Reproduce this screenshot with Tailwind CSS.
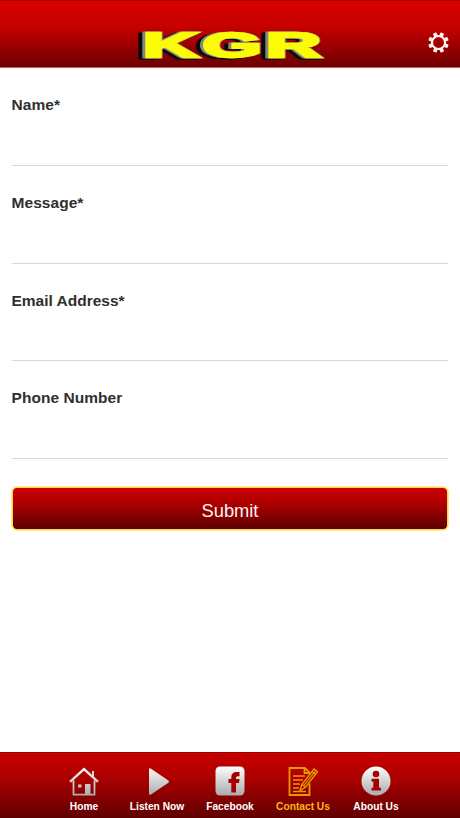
<!DOCTYPE html>
<html lang="en">
<head>
    <meta charset="UTF-8">
    <meta name="viewport" content="width=device-width, initial-scale=1.0">
    <title>KGR - Contact Us</title>
    <script src="https://cdn.jsdelivr.net/npm/@tailwindcss/browser@4"></script>
</head>
<body class="bg-white font-['Liberation_Sans',Arial,sans-serif]">

    <div class="flex flex-col w-full h-[818px] overflow-hidden">

        <!-- header -->
        <header class="relative shrink-0 h-[68px] border-t border-b border-t-[#a80000] border-b-[#c06060] bg-[linear-gradient(to_bottom,#db0000,#c40000_40%,#6d0000)]">
            <svg class="absolute left-[122px] top-[13px] overflow-visible [filter:drop-shadow(-2.5px_0.5px_0_#858585)_drop-shadow(1.5px_0.5px_0_#858585)_drop-shadow(-4px_1.5px_0_#0a0a0a)]" width="220" height="50" viewBox="0 0 220 50" role="img" aria-label="KGR">
                <text transform="translate(21 43) scale(2.17 1)" font-family="Liberation Sans" font-weight="700" font-size="35" fill="#fbfb05" stroke="#fbfb05" stroke-width="2.5" stroke-linejoin="miter" textLength="82" lengthAdjust="spacing">KGR</text>
            </svg>
            <button class="absolute left-[428px] top-[31px]" aria-label="Settings">
                <svg width="21" height="21" viewBox="-10 -10 20 20">
                    <g fill="#fff4ef">
                        <rect id="tooth" x="-1.8" y="-9.8" width="3.6" height="4" rx=".6" transform="rotate(22.5)"/>
                        <use href="#tooth" transform="rotate(45)"/>
                        <use href="#tooth" transform="rotate(90)"/>
                        <use href="#tooth" transform="rotate(135)"/>
                        <use href="#tooth" transform="rotate(180)"/>
                        <use href="#tooth" transform="rotate(225)"/>
                        <use href="#tooth" transform="rotate(270)"/>
                        <use href="#tooth" transform="rotate(315)"/>
                    </g>
                    <circle r="6.2" fill="none" stroke="#fff4ef" stroke-width="2"/>
                </svg>
            </button>
        </header>

        <!-- form -->
        <form class="flex-1 px-3 text-[#2f2f2f]">
            <div class="h-[97.8px] border-b border-[#d8d8d8] pt-[27px]">
                <label class="block text-[15.5px] leading-5 font-bold tracking-[0.05px] -ml-[0.5px]" for="name">Name*</label>
                <input class="block w-full h-10 outline-none" id="name" type="text">
            </div>
            <div class="h-[97.8px] border-b border-[#d8d8d8] pt-[27px]">
                <label class="block text-[15.5px] leading-5 font-bold tracking-[0.05px] -ml-[0.5px]" for="message">Message*</label>
                <input class="block w-full h-10 outline-none" id="message" type="text">
            </div>
            <div class="h-[97.8px] border-b border-[#d8d8d8] pt-[27px]">
                <label class="block text-[15.5px] leading-5 font-bold -ml-[0.5px]" for="email">Email Address*</label>
                <input class="block w-full h-10 outline-none" id="email" type="email">
            </div>
            <div class="h-[97.8px] border-b border-[#d8d8d8] pt-[27px]">
                <label class="block text-[15.5px] leading-5 font-bold tracking-[0.05px] -ml-[0.5px]" for="phone">Phone Number</label>
                <input class="block w-full h-10 outline-none" id="phone" type="tel">
            </div>
            <button class="block w-full h-[43px] mt-[28px] rounded-[5px] border border-[#ffd83c] bg-[linear-gradient(to_bottom,#cb0000,#b00000_35%,#5c0000)] text-[18.3px] text-[#fff4f0] pt-[5px] shadow-[0_0_0_0.6px_#ffd83c]" type="button">Submit</button>
        </form>

        <!-- tab bar -->
        <nav class="shrink-0 h-[66px] flex justify-center border-t border-[#960000] bg-[linear-gradient(to_bottom,#c80000,#b00000_35%,#600000)] text-white text-[10.2px] leading-3 font-bold whitespace-nowrap">
            <a class="w-[73px] flex flex-col items-center pt-[13px] gap-[5px]">
                <svg width="30" height="30" viewBox="0 0 30 30">
                    <defs>
                        <linearGradient id="silver" gradientUnits="userSpaceOnUse" x1="0" y1="0" x2="0" y2="30">
                            <stop offset="0" stop-color="#ffffff"/>
                            <stop offset="1" stop-color="#a9a9a9"/>
                        </linearGradient>
                    </defs>
                    <g fill="none" stroke="url(#silver)">
                        <path d="M1 15.8 15 3.2 29 15.8" stroke-width="2.4"/>
                        <path d="M4.5 14.5V28.6H25.5V14.5M24 10.5V5" stroke-width="1.8"/>
                    </g>
                    <path fill="url(#silver)" d="M16 18H21.5V28.5H16ZM9 18.5H12.5V21.5H9Z"/>
                </svg>
                <span>Home</span>
            </a>
            <a class="w-[73px] flex flex-col items-center pt-[13px] gap-[5px]">
                <svg width="30" height="30" viewBox="0 0 30 30">
                    <path fill="url(#silver)" d="M7 3.6Q7 1.6 9 2.7L26 14.2Q28 15.6 26 17L9 28.4Q7 29.5 7 27.5Z"/>
                </svg>
                <span>Listen Now</span>
            </a>
            <a class="w-[73px] flex flex-col items-center pt-[13px] gap-[5px]">
                <svg width="30" height="30" viewBox="0 0 30 30">
                    <rect x=".5" y=".5" width="29" height="29" rx="4.5" fill="url(#silver)"/>
                    <!-- f mark -->
                    <path fill="#a80000" d="M16.3 26.5V17H13.5V13H16.3V11.5Q16.3 6 21.5 6H24.5V10.3H22.7Q21 10.3 21 12V13H24.5L24 17H21V26.5Z"/>
                </svg>
                <span>Facebook</span>
            </a>
            <a class="w-[73px] flex flex-col items-center pt-[13px] gap-[5px] text-[#fdb719]">
                <svg width="30" height="30" viewBox="0 0 30 30" fill="none" stroke="#eb9800">
                    <path stroke-width="1.8" d="M21.5 17.5V29H1.5V2H17L21.5 6.5V8M16.5 2V7H21.5"/>
                    <path stroke-width="1.3" d="M5 10H17M5 14H15M5 18H12M5 22H11M5 25.5H18"/>
                    <path stroke-width="1.4" fill="#9f0000" d="M12 24.5 13.8 18.5 26 3 29.5 5.7 17.5 21.3Z"/>
                    <path stroke-width="1.2" d="M13.8 18.5 17.5 21.3M15.5 19.8 27.8 4.4M24 5.6 27.5 8.4"/>
                </svg>
                <span>Contact Us</span>
            </a>
            <a class="w-[73px] flex flex-col items-center pt-[13px] gap-[5px]">
                <svg width="30" height="30" viewBox="0 0 30 30">
                    <circle cx="15" cy="15" r="14.5" fill="url(#silver)"/>
                    <g fill="#a40000">
                        <circle cx="15" cy="8" r="3.3"/>
                        <path d="M10.5 12.7H18V21.8H20V24.5H10.5V21.8H12.3V15.4H10.5Z"/>
                    </g>
                </svg>
                <span>About Us</span>
            </a>
        </nav>

    </div>

</body>
</html>
